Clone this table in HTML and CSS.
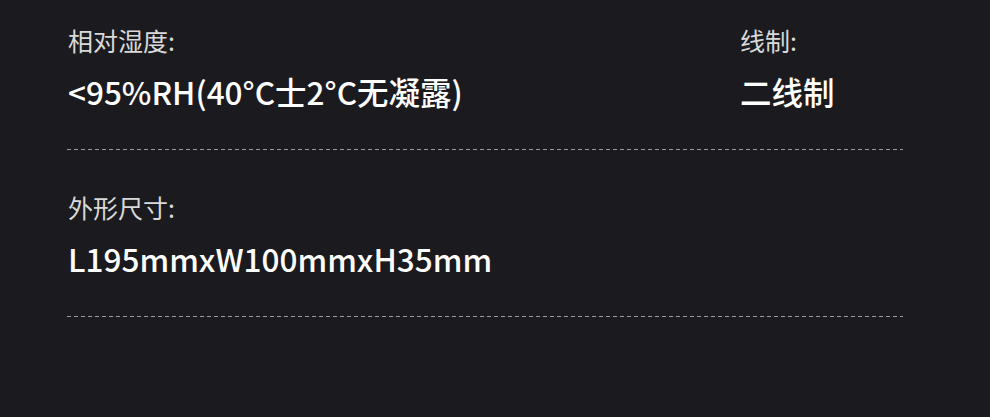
FILE: index.html
```html
<!DOCTYPE html>
<html lang="zh">
<head>
<meta charset="utf-8">
<link rel="stylesheet" href="styles.css">
</head>
<body>
<div class="sheet">
  <div class="row">
    <div class="cell">
      <div class="label">相对湿度:</div>
      <div class="value">&lt;95%RH(40°C士2°C无凝露)</div>
    </div>
    <div class="cell">
      <div class="label">线制:</div>
      <div class="value">二线制</div>
    </div>
  </div>
  <div class="rule"></div>
  <div class="row">
    <div class="cell">
      <div class="label">外形尺寸:</div>
      <div class="value">L195mmxW100mmxH35mm</div>
    </div>
  </div>
  <div class="rule"></div>
</div>
</body>
</html>
```
FILE: styles.css
```css
html, body {
  margin: 0;
  padding: 0;
  background: #1b1b1f;
}
body {
  font-family: "Noto Sans CJK SC", "Noto Sans", sans-serif;
  width: 990px;
  height: 417px;
  overflow: hidden;
}
.sheet {
  padding-left: 67px;
  width: 836px;
}
.row {
  display: grid;
  grid-template-columns: 672px 1fr;
  padding: 40px 0 37px 1px;
}
.row:first-child {
  padding-top: 23px;
}
.label {
  font-size: 25px;
  line-height: 34px;
  color: #d9d9d9;
}
.value {
  margin-top: 13px;
  font-size: 31.5px;
  line-height: 42px;
  font-weight: 500;
  color: #ffffff;
}
.rule {
  height: 1px;
  background: repeating-linear-gradient(to right, #9a9a9a 0 4px, transparent 4px 7px);
}
```
